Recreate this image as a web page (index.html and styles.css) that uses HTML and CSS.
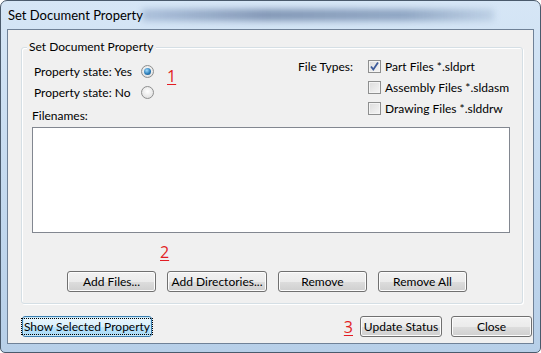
FILE: index.html
```html
<!DOCTYPE html>
<html lang="en">
<head>
    <meta charset="UTF-8">
    <meta name="viewport" content="width=device-width, initial-scale=1.0">
    <title>Set Document Property</title>
    <link rel="stylesheet" href="styles.css">
</head>
<body>
    <div class="window">
        <div class="titlebar">
            <span class="title">Set Document Property</span>
            <span class="title-blur"></span>
        </div>
        <div class="client">
            <div class="group">
                <span class="legend">Set Document Property</span>
                <div class="top">
                    <div class="left-col">
                        <div class="radio-row">
                            <span class="radio-label">Property state: Yes</span>
                            <span class="radio checked"></span>
                            <span class="marker marker-1">1</span>
                        </div>
                        <div class="radio-row">
                            <span class="radio-label">Property state: No</span>
                            <span class="radio"></span>
                        </div>
                        <div class="files-label">Filenames:</div>
                    </div>
                    <div class="right-col">
                        <span class="types-label">File Types:</span>
                        <div class="checks">
                            <label class="check-row">
                                <span class="check checked">
                                    <svg width="11" height="11" viewBox="0 0 11 11"><path d="M2 5.5 L4.3 8.5 L9 1.5" fill="none" stroke="#3c5a9a" stroke-width="1.8"/></svg>
                                </span>
                                Part Files *.sldprt
                            </label>
                            <label class="check-row"><span class="check"></span>Assembly Files *.sldasm</label>
                            <label class="check-row"><span class="check"></span>Drawing Files *.slddrw</label>
                        </div>
                    </div>
                </div>
                <div class="listbox"></div>
                <div class="marker-row"><span class="marker">2</span></div>
                <div class="button-row">
                    <button class="btn btn-add">Add Files...</button>
                    <button class="btn btn-dirs">Add Directories...</button>
                    <button class="btn btn-remove">Remove</button>
                    <button class="btn btn-remove">Remove All</button>
                </div>
            </div>
            <div class="bottom-bar">
                <button class="btn btn-show focused"><span class="focus-ring">Show Selected Property</span></button>
                <span class="spacer"></span>
                <span class="marker marker-3">3</span>
                <button class="btn btn-update">Update Status</button>
                <button class="btn btn-close">Close</button>
            </div>
        </div>
    </div>
</body>
</html>
```
FILE: styles.css
```css
body {
    margin: 0;
    font-family: Lato, "Open Sans", sans-serif;
    font-size: 12px;
    color: #000;
    background: #fff;
    white-space: nowrap;
}
.window {
    box-sizing: border-box;
    width: 541px;
    height: 353px;
    border: 1px solid #4a5a6c;
    border-radius: 7px 7px 5px 5px;
    background: linear-gradient(to bottom, #d6e6f6, #c2d8ee 60%, #b7cfe8);
    padding: 0 6px 8px 6px;
    display: flex;
    flex-direction: column;
    overflow: hidden;
}
.titlebar {
    height: 28px;
    display: flex;
    align-items: center;
    position: relative;
}
.title {
    padding-left: 1px;
    font-size: 13px;
    position: relative;
    z-index: 1;
}
.title-blur {
    position: absolute;
    left: 135px;
    right: 40px;
    top: 8px;
    height: 12px;
    background: linear-gradient(to right, rgba(80, 110, 160, 0.3), rgba(50, 75, 120, 0.5) 35%, rgba(60, 90, 135, 0.45) 75%, rgba(100, 130, 170, 0.2));
    filter: blur(3px);
}
.client {
    flex: 1;
    background: #f0f0f0;
    border: 1px solid #6f8197;
    display: flex;
    flex-direction: column;
    padding: 17px 1px 6px 13px;
}
.group {
    position: relative;
    border: 1px solid #d5dfe5;
    border-radius: 3px;
    box-shadow: inset 1px 1px 0 #fff, 1px 1px 0 #fff;
    padding: 8px 12px 11px 10px;
    margin-right: 9px;
}
.legend {
    position: absolute;
    top: -9px;
    left: 5px;
    padding: 0 2px;
    background: #f0f0f0;
    line-height: 16px;
}
.top {
    display: flex;
    align-items: flex-start;
}
.left-col {
    padding-top: 5px;
}
.radio-row {
    display: flex;
    align-items: center;
    height: 21px;
    padding-left: 2px;
}
.radio-label {
    width: 107px;
}
.radio {
    box-sizing: border-box;
    width: 13px;
    height: 13px;
    border-radius: 50%;
    border: 1px solid #8e8f8f;
    background: radial-gradient(circle at 50% 40%, #fff, #e4e4e4 70%, #d0d0d0);
    display: flex;
    align-items: center;
    justify-content: center;
}
.radio.checked::after {
    content: "";
    width: 7px;
    height: 7px;
    border-radius: 50%;
    background: radial-gradient(circle at 40% 35%, #9fdcff, #2d7db8 55%, #0e4f7e);
}
.marker {
    color: #e21d24;
    font-family: "Open Sans", sans-serif;
    font-size: 16px;
    text-decoration: underline;
    text-underline-offset: 2px;
    line-height: 16px;
}
.marker-1 {
    margin-left: 13px;
    margin-top: 9px;
}
.files-label {
    margin-top: 5px;
    height: 17px;
}
.right-col {
    margin-left: auto;
    display: flex;
    width: 212px;
}
.types-label {
    width: 70px;
    line-height: 21px;
}
.check-row {
    display: flex;
    align-items: center;
    height: 21px;
}
.check {
    box-sizing: border-box;
    width: 13px;
    height: 13px;
    border: 1px solid #8e8f8f;
    background: linear-gradient(135deg, #dcdcdc, #f5f5f5);
    box-shadow: inset 0 0 0 1px #f4f4f4;
    margin-right: 4px;
    display: flex;
    align-items: center;
    justify-content: center;
}
.listbox {
    height: 104px;
    background: #fff;
    border: 1px solid #828790;
    margin-top: 2px;
}
.marker-row {
    height: 38px;
    padding-left: 128px;
    display: flex;
    align-items: center;
}
.button-row {
    display: flex;
    gap: 11px;
    padding-left: 35px;
}
.btn {
    box-sizing: border-box;
    height: 21px;
    font-family: Lato, "Open Sans", sans-serif;
    font-size: 12px;
    color: #000;
    border: 1px solid #707070;
    border-radius: 3px;
    background: linear-gradient(to bottom, #f2f2f2 0%, #ebebeb 50%, #dddddd 51%, #cfcfcf 100%);
    box-shadow: inset 0 0 0 1px #fcfcfc;
    padding: 0;
    display: flex;
    align-items: center;
    justify-content: center;
    white-space: nowrap;
}
.btn-add { width: 89px; }
.btn-dirs { width: 100px; }
.btn-remove { width: 89px; }
.bottom-bar {
    display: flex;
    align-items: center;
    margin-top: 12px;
    padding-left: 1px;
}
.btn-show {
    width: 130px;
    border-color: #3c7fb1;
    background: linear-gradient(to bottom, #eaf6fd 0%, #d9f0fc 50%, #bee6fd 51%, #a7d9f5 100%);
    box-shadow: inset 0 0 0 1px #c8e8f8;
}
.focus-ring {
    outline: 1px dotted #000;
    outline-offset: 0;
    padding: 0 2px;
    line-height: 15px;
}
.spacer {
    flex: 1;
}
.marker-3 {
    margin-right: 7px;
}
.btn-update { width: 82px; }
.btn-close {
    width: 81px;
    margin-left: 9px;
}
```
